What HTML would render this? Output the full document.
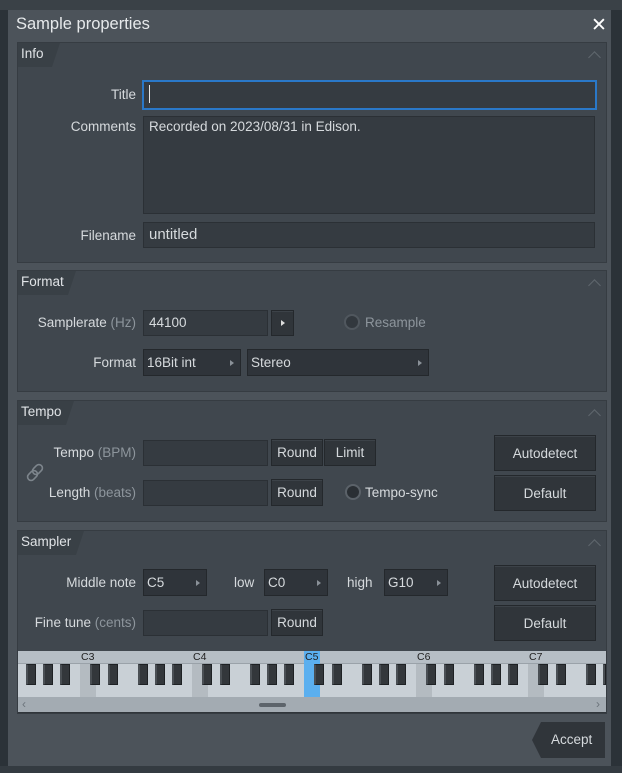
<!DOCTYPE html>
<html><head><meta charset="utf-8"><style>
*{box-sizing:border-box;margin:0;padding:0}
body{width:622px;height:773px;overflow:hidden;background:#2b3238;font-family:"Liberation Sans",sans-serif;color:#d6dadd;font-size:13.5px;position:relative}
.a{position:absolute}
.dlg{left:8px;top:10px;width:603px;height:756px;background:#4c535a}
.sec{background:#40474e;border:1px solid #363c42}
.tab{position:absolute;left:0;top:0;height:24px;padding:3px 0 0 3px;background:#394046;font-size:13.5px;color:#e0e3e6;clip-path:polygon(0 0,100% 0,calc(100% - 8px) 100%,0 100%)}
.chev{position:absolute;right:7px;top:10px;width:9px;height:9px;border-left:1px solid #5f676e;border-top:1px solid #5f676e;transform:rotate(45deg)}
.inp{background:#353b41;border:1px solid #2b3035}
.btn{background:#30353a;border:1px solid #24282c;text-align:center;color:#d6dadd;box-shadow:inset 0 1px 0 #3c4248}
.lbl{text-align:right;color:#d6dadd}
.dim{color:#8d959c}
.dd{background:#2f343a;border:1px solid #24282c;padding:5px 0 0 3px}
.dd:after{content:"";position:absolute;right:6px;top:10px;border-left:4px solid #8a9198;border-top:3.5px solid transparent;border-bottom:3.5px solid transparent}
.radio{width:16px;height:16px;border-radius:50%;background:#2a2f34;border:2px solid #5b6269}
.bk{position:absolute;top:664px;width:10px;height:21px;background:#33373b;border:1px solid #1e2124;border-left:2px solid #4a4f54}
</style></head><body>
<div class="a" style="left:0;top:0;width:622px;height:10px;background:#3a4147"></div>
<div class="a dlg"></div>
<div class="a" style="left:16px;top:15px;font-size:16.5px;color:#e6e9eb">Sample properties</div>
<div class="a" style="left:591px;top:14px;font-size:19px;color:#fff">✕</div>

<!-- Info -->
<div class="a sec" style="left:17px;top:42px;width:590px;height:221px"><div class="tab" style="width:42px">Info</div><div class="chev"></div></div>
<div class="a lbl" style="left:40px;top:87px;width:96px">Title</div>
<div class="a" style="left:142px;top:80px;width:455px;height:30px;background:#353b41;border:2px solid #2a78c8"></div>
<div class="a" style="left:149px;top:85px;width:1px;height:18px;background:#e8e8e8"></div>
<div class="a lbl" style="left:40px;top:119px;width:96px">Comments</div>
<div class="a inp" style="left:143px;top:116px;width:452px;height:98px;padding:2px 5px">Recorded on 2023/08/31 in Edison.</div>
<div class="a lbl" style="left:40px;top:228px;width:96px">Filename</div>
<div class="a inp" style="left:143px;top:222px;width:452px;height:26px;padding:3px 5px;font-size:15px">untitled</div>

<!-- Format -->
<div class="a sec" style="left:17px;top:270px;width:590px;height:122px"><div class="tab" style="width:58px">Format</div><div class="chev"></div></div>
<div class="a lbl" style="left:20px;top:315px;width:116px">Samplerate <span class="dim">(Hz)</span></div>
<div class="a inp" style="left:143px;top:310px;width:125px;height:26px;padding:4px 5px">44100</div>
<div class="a btn" style="left:271px;top:310px;width:23px;height:26px"><div class="a" style="left:9px;top:9px;border-left:4px solid #ddd;border-top:3.5px solid transparent;border-bottom:3.5px solid transparent"></div></div>
<div class="a radio" style="left:344px;top:314px;opacity:.6"></div>
<div class="a dim" style="left:365px;top:315px">Resample</div>
<div class="a lbl" style="left:40px;top:355px;width:96px">Format</div>
<div class="a dd" style="left:143px;top:349px;width:98px;height:27px">16Bit int</div>
<div class="a dd" style="left:247px;top:349px;width:182px;height:27px">Stereo</div>

<!-- Tempo -->
<div class="a sec" style="left:17px;top:400px;width:590px;height:122px"><div class="tab" style="width:56px">Tempo</div><div class="chev"></div></div>
<div class="a lbl" style="left:20px;top:445px;width:116px">Tempo <span class="dim">(BPM)</span></div>
<div class="a inp" style="left:143px;top:440px;width:125px;height:26px"></div>
<div class="a btn" style="left:271px;top:439px;width:52px;height:27px;padding-top:5px">Round</div>
<div class="a btn" style="left:324px;top:439px;width:52px;height:27px;padding-top:5px">Limit</div>
<svg class="a" style="left:25px;top:462px" width="22" height="22" viewBox="0 0 22 22"><g fill="none" stroke="#7d858c" stroke-width="1.6"><rect x="9" y="2" width="7" height="11" rx="3.5" transform="rotate(45 12.5 7.5)"/><rect x="4" y="8" width="7" height="11" rx="3.5" transform="rotate(45 7.5 13.5)"/></g></svg>
<div class="a lbl" style="left:20px;top:485px;width:116px">Length <span class="dim">(beats)</span></div>
<div class="a inp" style="left:143px;top:480px;width:125px;height:26px"></div>
<div class="a btn" style="left:271px;top:479px;width:52px;height:27px;padding-top:5px">Round</div>
<div class="a radio" style="left:345px;top:484px"></div>
<div class="a" style="left:365px;top:485px">Tempo-sync</div>
<div class="a btn" style="left:494px;top:435px;width:102px;height:36px;padding-top:10px">Autodetect</div>
<div class="a btn" style="left:494px;top:475px;width:102px;height:36px;padding-top:10px">Default</div>

<!-- Sampler -->
<div class="a sec" style="left:17px;top:530px;width:590px;height:184px"><div class="tab" style="width:66px">Sampler</div><div class="chev"></div></div>
<div class="a lbl" style="left:20px;top:575px;width:116px">Middle note</div>
<div class="a dd" style="left:143px;top:569px;width:64px;height:27px">C5</div>
<div class="a" style="left:234px;top:575px">low</div>
<div class="a dd" style="left:264px;top:569px;width:64px;height:27px">C0</div>
<div class="a" style="left:347px;top:575px">high</div>
<div class="a dd" style="left:384px;top:569px;width:64px;height:27px">G10</div>
<div class="a lbl" style="left:20px;top:615px;width:116px">Fine tune <span class="dim">(cents)</span></div>
<div class="a inp" style="left:143px;top:610px;width:125px;height:26px"></div>
<div class="a btn" style="left:271px;top:609px;width:52px;height:27px;padding-top:5px">Round</div>
<div class="a btn" style="left:494px;top:565px;width:102px;height:36px;padding-top:10px">Autodetect</div>
<div class="a btn" style="left:494px;top:605px;width:102px;height:36px;padding-top:10px">Default</div>

<!-- keyboard -->
<div class="a" style="left:18px;top:651px;width:588px;height:62px;overflow:hidden;background:#c9d0d6"></div>
<div class="a" style="left:18px;top:651px;width:588px;height:13px;background:#b6bec5;border-bottom:1px solid #9aa2a9"></div>
<div class="a" style="left:80px;top:664px;width:16px;height:33px;background:#b4bbc1"></div>
<div class="a" style="left:192px;top:664px;width:16px;height:33px;background:#b4bbc1"></div>
<div class="a" style="left:304px;top:651px;width:16px;height:46px;background:#5bafef"></div>
<div class="a" style="left:416px;top:664px;width:16px;height:33px;background:#b4bbc1"></div>
<div class="a" style="left:528px;top:664px;width:16px;height:33px;background:#b4bbc1"></div>
<div class="a" style="left:81px;top:651px;font-size:10.5px;color:#222">C3</div>
<div class="a" style="left:193px;top:651px;font-size:10.5px;color:#222">C4</div>
<div class="a" style="left:305px;top:651px;font-size:10.5px;color:#222">C5</div>
<div class="a" style="left:417px;top:651px;font-size:10.5px;color:#222">C6</div>
<div class="a" style="left:529px;top:651px;font-size:10.5px;color:#222">C7</div>
<div class="bk" style="left:26px"></div><div class="bk" style="left:43px"></div><div class="bk" style="left:60px"></div>
<div class="bk" style="left:90px"></div><div class="bk" style="left:108px"></div><div class="bk" style="left:138px"></div><div class="bk" style="left:155px"></div><div class="bk" style="left:172px"></div>
<div class="bk" style="left:202px"></div><div class="bk" style="left:220px"></div><div class="bk" style="left:250px"></div><div class="bk" style="left:267px"></div><div class="bk" style="left:284px"></div>
<div class="bk" style="left:314px"></div><div class="bk" style="left:332px"></div><div class="bk" style="left:362px"></div><div class="bk" style="left:379px"></div><div class="bk" style="left:396px"></div>
<div class="bk" style="left:426px"></div><div class="bk" style="left:444px"></div><div class="bk" style="left:474px"></div><div class="bk" style="left:491px"></div><div class="bk" style="left:508px"></div>
<div class="bk" style="left:538px"></div><div class="bk" style="left:556px"></div><div class="bk" style="left:586px"></div><div class="bk" style="left:603px;width:3px"></div>
<div class="a" style="left:18px;top:697px;width:588px;height:16px;background:#a3abb2;border-bottom:1px solid #30353a"></div>
<div class="a" style="left:259px;top:703px;width:27px;height:4px;border-radius:2px;background:#5d646b"></div>
<div class="a" style="left:22px;top:697px;font-size:12px;color:#6c747b">‹</div>
<div class="a" style="left:596px;top:697px;font-size:12px;color:#6c747b">›</div>

<div class="a" style="left:532px;top:722px;width:73px;height:36px;background:#30353a;clip-path:polygon(9px 0,100% 0,100% 100%,9px 100%,0 50%);color:#d6dadd;padding:10px 0 0 19px">Accept</div>
<div class="a" style="left:0;top:766px;width:622px;height:7px;background:#343b41"></div>
</body></html>
